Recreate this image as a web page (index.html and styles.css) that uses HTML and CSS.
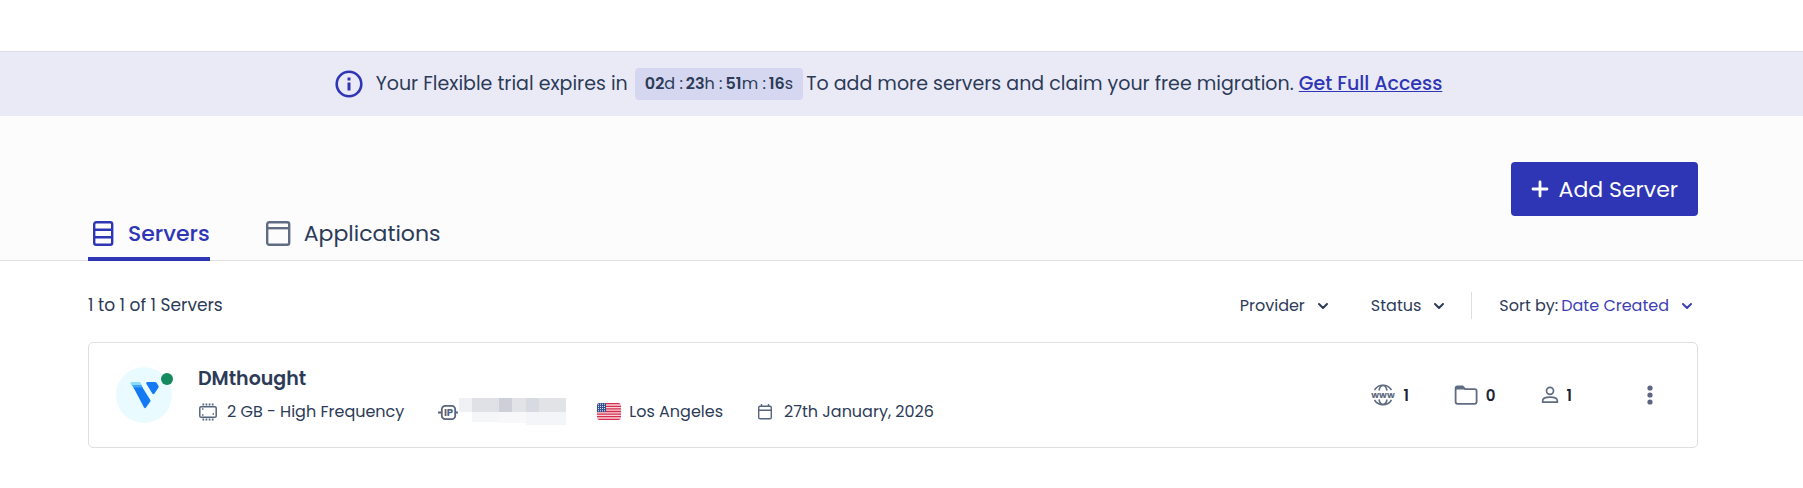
FILE: index.html
```html
<!DOCTYPE html>
<html lang="en">

<head>
    <meta charset="UTF-8">
    <meta name="viewport" content="width=device-width, initial-scale=1.0">
    <title>Servers</title>
    <link rel="stylesheet" href="styles.css">
</head>

<body>
    <div class="trial-banner">
        <svg class="info-icon" viewBox="0 0 28 28" width="28" height="28" aria-hidden="true">
            <circle cx="14" cy="14" r="12.3" fill="none" stroke="currentColor" stroke-width="2.6" />
            <rect x="12.5" y="12.5" width="3" height="8" fill="currentColor" />
            <rect x="12.5" y="7.5" width="3" height="3" fill="currentColor" />
        </svg>
        <span class="trial-text">Your Flexible trial expires in</span>
        <span class="timer"><b>02</b>d :<b>23</b>h :<b>51</b>m :<b>16</b>s</span>
        <span class="trial-more">To add more servers and claim your free migration. <a href="#">Get Full Access</a></span>
    </div>

    <header class="page-header">
        <nav class="tabs">
            <a class="tab active" href="#">
                <svg viewBox="0 0 28 28" width="28" height="28" fill="none" stroke="currentColor" stroke-width="2.4" aria-hidden="true">
                    <rect x="6.2" y="2.2" width="18" height="22.5" rx="2" />
                    <path d="M6 9.7h18M6 17.2h18" />
                </svg>
                Servers
            </a>
            <a class="tab" href="#">
                <svg viewBox="0 0 28 28" width="28" height="28" fill="none" stroke="currentColor" stroke-width="2.4" aria-hidden="true">
                    <rect x="3.2" y="2.2" width="22" height="22.5" rx="2" />
                    <path d="M3 8.2h22" />
                </svg>
                Applications
            </a>
        </nav>
        <button class="add-server" type="button">
            <svg viewBox="0 0 18 18" width="18" height="18" aria-hidden="true">
                <path d="M9 2v14M2 9h14" stroke="currentColor" stroke-width="2.8" stroke-linecap="round" />
            </svg>
            Add Server
        </button>
    </header>

    <main class="content">
        <div class="toolbar">
            <span class="count">1 to 1 of 1 Servers</span>
            <div class="filters">
                <div class="dropdown">
                    <select aria-label="Provider">
                        <option>Provider</option>
                    </select>
                    <svg viewBox="0 0 12 12" width="12" height="12" aria-hidden="true"><path d="M2 4l4 4 4-4" /></svg>
                </div>
                <div class="dropdown">
                    <select aria-label="Status">
                        <option>Status</option>
                    </select>
                    <svg viewBox="0 0 12 12" width="12" height="12" aria-hidden="true"><path d="M2 4l4 4 4-4" /></svg>
                </div>
                <div class="sort">
                    <label for="sort-by">Sort by:</label>
                    <div class="dropdown">
                        <select id="sort-by">
                            <option>Date Created</option>
                        </select>
                        <svg viewBox="0 0 12 12" width="12" height="12" aria-hidden="true"><path d="M2 4l4 4 4-4" /></svg>
                    </div>
                </div>
            </div>
        </div>

        <article class="server-card">
            <div class="avatar">
                <svg viewBox="0 0 56 56" width="56" height="56" aria-hidden="true">
                    <path d="M15.5 15H24l2 3.500h-8.500L16 19l-1.500-2.500q-.5-1.500 1-1.500z" fill="#8adcf8" />
                    <path d="M16 18h9.300l2 3.500h-9.300z" fill="#3fa4f7" />
                    <path d="M17.500 20.500h9L34.300 33q.5.800 0 1.600L30 40.500q-1 1.300-2 0z" fill="#147af3" />
                    <path d="M31.500 15h7q1.500 0 2.200 1l1.800 3q.5.800 0 1.600L38.500 26.500q-1.200 1.300-2.200 0l-6-9.700q-.8-1.600 1.200-1.800z" fill="#147af3" />
                </svg>
                <span class="status-dot"></span>
            </div>
            <div class="details">
                <h2>DMthought</h2>
                <ul class="meta">
                    <li class="size">
                        <svg viewBox="0 0 20 20" width="20" height="20" fill="none" stroke="currentColor" aria-hidden="true">
                            <rect x="1.8" y="4.8" width="16.4" height="10.4" rx="1.3" stroke-width="1.5" />
                            <path d="M4.500 2.500h11M4.500 17.500h11" stroke-width="1.8" stroke-dasharray="1.7 1.4" />
                            <path d="M4 7h1.500M4 13h1.500M14.500 12h1.500" stroke-width="1.4" />
                        </svg>
                        2 GB - High Frequency
                    </li>
                    <li class="ip">
                        <svg viewBox="0 0 20 20" width="20" height="20" fill="none" stroke="currentColor" aria-hidden="true">
                            <rect x="3.8" y="3.8" width="13.4" height="13.4" rx="3.5" stroke-width="1.8" />
                            <path d="M0 10.500h4M17 10.500h3" stroke-width="1.8" />
                            <text x="10.5" y="14" text-anchor="middle" font-size="10" font-weight="700" fill="currentColor" stroke="none">IP</text>
                        </svg>
                        <span class="masked">
                            <svg viewBox="0 0 107 27" width="107" height="27" role="img" aria-label="Hidden address">
                                <path d="M0 0h13v14H0z" fill="#f0f1f4" />
                                <path d="M13 0h94v14H13z" fill="#dfe1e6" />
                                <path d="M40 0h13v14H40z" fill="#cdd0d8" />
                                <path d="M67 0h13v14H67z" fill="#d8dae1" />
                                <path d="M53 0h14v14H53zM80 0h27v14H80z" fill="#e1e3e7" />
                                <path d="M13 14h27v10H13z" fill="#f5f6f8" />
                                <path d="M40 14h40v11H40z" fill="#f8f8fa" />
                                <path d="M67 14h40v13H67z" fill="#f4f5f8" />
                            </svg>
                        </span>
                    </li>
                    <li class="place">
                        <svg class="flag" viewBox="0 0 24 17" width="24" height="17" aria-hidden="true">
                            <path d="M0 0h24v17H0z" fill="#fbd3da" />
                            <path d="M0 .7h24M0 3.3h24M0 5.9h24M0 8.5h24M0 11.1h24M0 13.7h24M0 16.3h24" stroke="#d32f4f" stroke-width="1.3" />
                            <path d="M0 0h9v9H0z" fill="#32508f" />
                            <path d="M1 1.2h8M1 3.4h8M1 5.6h8M1 7.8h8" stroke="#fff" stroke-width=".9" stroke-dasharray="1 1" />
                        </svg>
                        Los Angeles
                    </li>
                    <li class="date">
                        <svg viewBox="0 0 16 18" width="16" height="18" fill="none" stroke="currentColor" stroke-width="1.4" aria-hidden="true">
                            <rect x="1.7" y="3.2" width="12.6" height="12.6" rx="1.3" />
                            <path d="M1.700 7.200h12.600M4.500 1v2.500M11.500 1v2.500" />
                        </svg>
                        27th January, 2026
                    </li>
                </ul>
            </div>
            <div class="stats">
                <a class="stat" href="#" aria-label="Websites 1">
                    <svg viewBox="0 0 24 24" width="24" height="24" fill="none" stroke="currentColor" stroke-width="1.6" aria-hidden="true">
                        <path d="M3.500 7a10 10 0 0 1 17 0M3.500 17a10 10 0 0 0 17 0" />
                        <path d="M8 7.500q1-5 4-5t4 5M8 16.500q1 5 4 5t4-5" />
                        <text x="12" y="14.5" text-anchor="middle" font-size="9" font-weight="700" fill="currentColor" stroke="none">www</text>
                    </svg>
                    1
                </a>
                <a class="stat" href="#" aria-label="Projects 0">
                    <svg viewBox="0 0 24 24" width="24" height="24" fill="none" stroke="currentColor" stroke-width="1.8" aria-hidden="true">
                        <path d="M1.600 18.800V5.500q0-2 2-2h5l2.500 2.600h9.500q2 0 2 2v10.700q0 2-2 2h-17q-2 0-2-2z" />
                        <path d="M1.500 3.500h8l2 3h-10z" fill="currentColor" stroke="none" />
                    </svg>
                    0
                </a>
                <a class="stat" href="#" aria-label="Members 1">
                    <svg viewBox="0 0 18 18" width="18" height="18" fill="none" stroke="currentColor" stroke-width="1.7" aria-hidden="true">
                        <circle cx="9" cy="4.8" r="3.5" />
                        <path d="M1.700 16.200v-1.700q0-3.400 7.300-3.400t7.300 3.400v1.700z" stroke-linejoin="round" />
                    </svg>
                    1
                </a>
            </div>
            <button class="more" type="button" aria-label="More actions">
                <svg viewBox="0 0 6 20" width="6" height="20" fill="currentColor" aria-hidden="true">
                    <circle cx="3" cy="3" r="2.6" />
                    <circle cx="3" cy="10" r="2.6" />
                    <circle cx="3" cy="17" r="2.6" />
                </svg>
            </button>
        </article>
    </main>
</body>

</html>
```

FILE: styles.css
```css
* {
    box-sizing: border-box;
}

body {
    margin: 0;
    padding-top: 51px;
    background: #fff;
    color: #2c3b57;
    font-family: Poppins, Inter, sans-serif;
    font-size: 16px;
}

button,
select {
    font: inherit;
    border: 0;
    background: none;
    cursor: pointer;
}

a {
    color: inherit;
    text-decoration: none;
}

/* trial banner */
.trial-banner {
    display: flex;
    align-items: center;
    justify-content: center;
    padding: 16px 26px 16px 0;
    border-top: 1px solid #dcdde8;
    background: #eaeaf7;
    font-size: 19px;
    line-height: 32px;
}

.info-icon {
    margin-right: 13px;
    color: #2e36b5;
}

.timer {
    margin: 0 3px 0 7px;
    padding: 4px 10px;
    border-radius: 4px;
    background: #d5d7f0;
    font-size: 16px;
    line-height: 24px;
}

.timer b {
    margin-left: 3px;
    font-weight: 600;
}

.timer b:first-child {
    margin-left: 0;
}

.trial-more a {
    color: #2e36b5;
    font-weight: 500;
    text-decoration: underline;
}

/* header with tabs */
.page-header {
    display: flex;
    justify-content: space-between;
    align-items: flex-start;
    padding: 46px 105px 0 88px;
    border-bottom: 1px solid #dedfe3;
    background: #fcfcfd;
}

.tabs {
    display: flex;
    gap: 54px;
    margin-top: 50px;
    margin-bottom: -1px;
}

.tab {
    display: flex;
    align-items: center;
    gap: 12px;
    height: 49px;
    padding-bottom: 6px;
    font-size: 22px;
}

.tab svg {
    color: #5f6c82;
}

.tab.active {
    padding-bottom: 2px;
    border-bottom: 4px solid #2e36b5;
    border-radius: 3px 3px 0 0;
    color: #2e36b5;
    font-weight: 500;
}

.tab.active svg {
    color: inherit;
}

.add-server {
    display: flex;
    align-items: center;
    gap: 10px;
    height: 54px;
    padding: 0 20px;
    border-radius: 4px;
    background: #2e36b5;
    color: #fff;
    font-size: 22px;
}

/* server list */
.content {
    padding: 31px 105px 40px 88px;
}

.toolbar {
    display: flex;
    justify-content: space-between;
    align-items: center;
    margin-bottom: 23px;
}

.count {
    font-size: 17px;
    line-height: 27px;
}

.filters,
.sort {
    display: flex;
    align-items: center;
}

.filters {
    gap: 42px;
    padding-right: 5px;
}

.sort {
    gap: 3px;
    height: 27px;
    margin-left: -16px;
    padding-left: 27px;
    border-left: 1px solid #dedfe3;
}

.dropdown {
    display: grid;
    align-items: center;
}

.dropdown select,
.dropdown svg {
    grid-area: 1 / 1;
}

.dropdown select {
    appearance: none;
    field-sizing: content;
    padding: 0 24px 0 0;
    color: #2c3b57;
}

.dropdown svg {
    justify-self: end;
    pointer-events: none;
    fill: none;
    stroke: #2c3b57;
    stroke-width: 2;
    stroke-linecap: round;
    stroke-linejoin: round;
}

.dropdown #sort-by {
    color: #3d3fb4;
}

.sort svg {
    stroke: #3d3fb4;
}

.server-card {
    display: flex;
    align-items: center;
    padding: 22px 40px 22px 27px;
    border: 1px solid #dedfe3;
    border-radius: 5px;
}

.avatar {
    position: relative;
    height: 56px;
    margin-right: 26px;
    border-radius: 50%;
    background: #e9fbff;
}

.status-dot {
    position: absolute;
    top: 6px;
    right: -1px;
    width: 12px;
    height: 12px;
    border-radius: 50%;
    background: #158a5f;
}

.details {
    padding-top: 2px;
}

.details h2 {
    margin: 0 0 7px;
    font-size: 19px;
    font-weight: 600;
    line-height: 24px;
}

.meta {
    display: flex;
    align-items: center;
    margin: 0;
    padding: 0;
    gap: 34px;
    list-style: none;
}

.meta li {
    display: flex;
    align-items: center;
    gap: 9px;
    height: 27px;
}

.meta svg {
    color: #56647d;
}

.meta .ip {
    gap: 1px;
}

.meta .place {
    margin-left: -3px;
    gap: 8px;
}

.meta .date {
    gap: 11px;
}

.masked {
    display: flex;
}

.flag {
    border-radius: 3px;
}

.stats {
    display: flex;
    gap: 45px;
    margin-left: auto;
}

.stat {
    display: flex;
    align-items: center;
    gap: 8px;
    color: #1d2432;
    font-size: 15px;
    font-weight: 600;
}

.stat svg {
    color: #5f6c82;
}

.more {
    display: flex;
    margin-left: 71px;
    padding: 4px;
    color: #5d6484;
}
```
